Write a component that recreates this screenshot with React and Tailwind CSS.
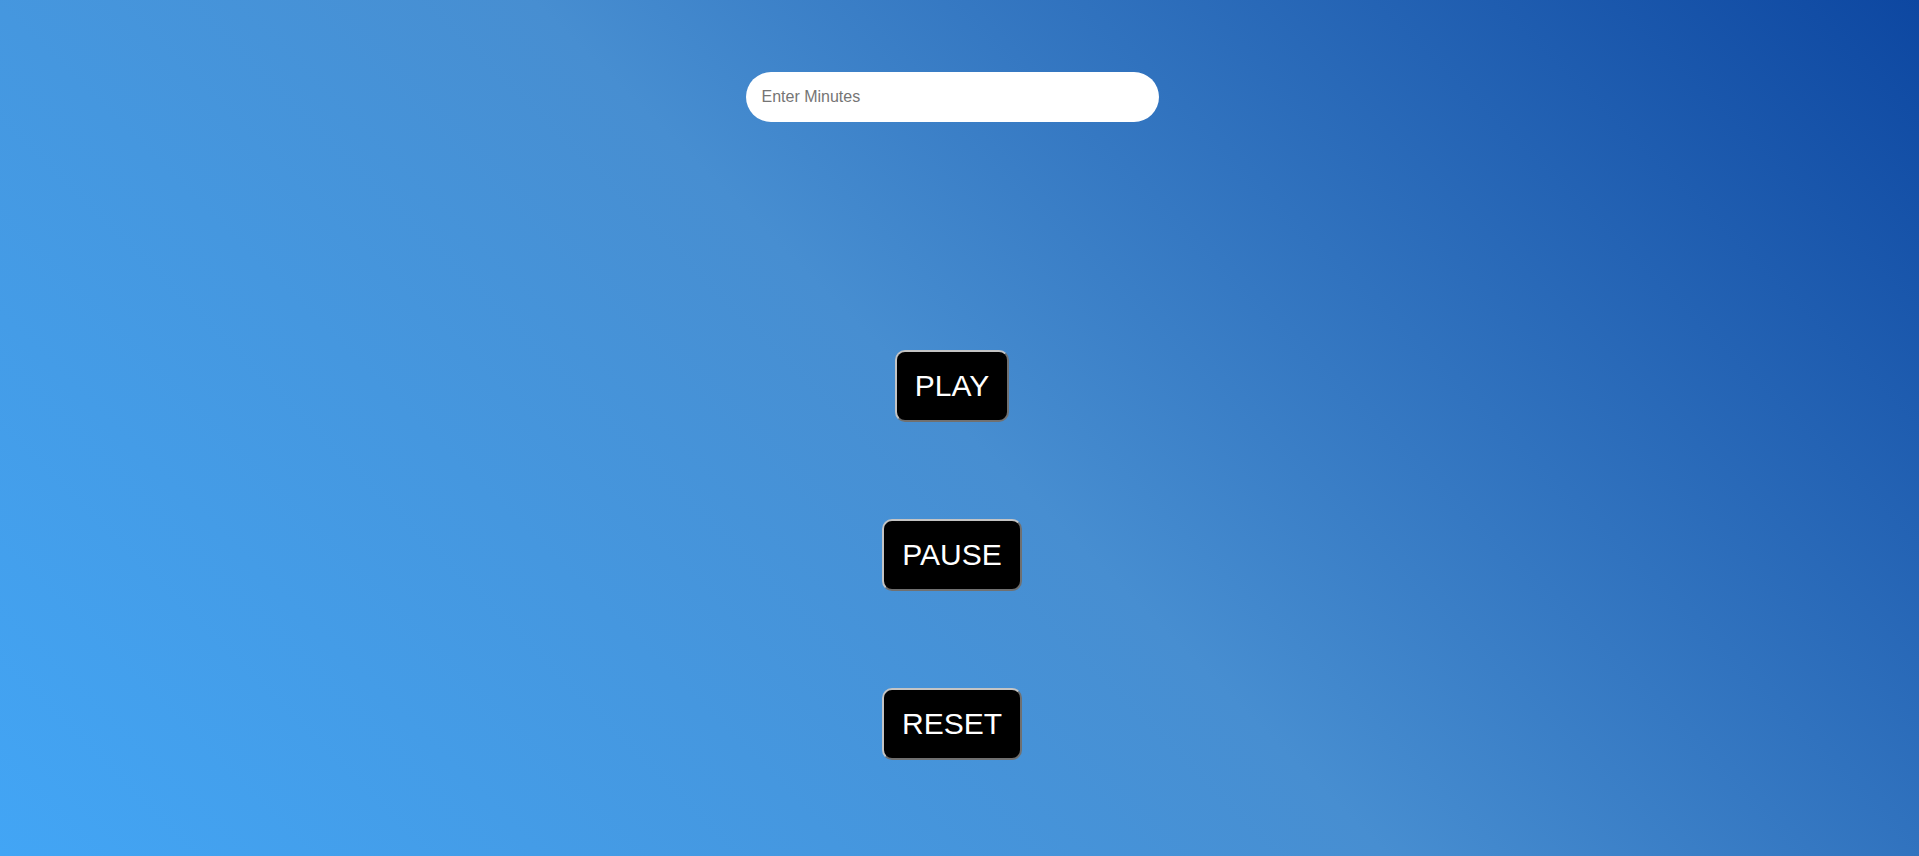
export default function App() {
  const buttons = ["PLAY", "PAUSE", "RESET"];

  return (
    <div className="min-h-[1590px] bg-fixed bg-[linear-gradient(45deg,#42a5f5,#478ed1,#0d47a1)] font-['Liberation_Sans',Arial,sans-serif]">
      <div className="flex flex-col items-center pr-[15px] pt-[72px]">
        <input
          type="text"
          placeholder="Enter Minutes"
          className="h-[50px] w-[413px] rounded-full border-0 bg-white px-4 text-base text-black outline-none placeholder:text-[#757575]"
        />

        <div className="mt-[228px] flex flex-col items-center gap-[97px]">
          {buttons.map((label) => (
            <button
              key={label}
              type="button"
              className="rounded-[10px] border-2 border-[#c4c4c4] bg-black px-[18px] py-[17px] text-[30px] leading-[34px] text-white [border-style:outset]"
            >
              {label}
            </button>
          ))}
        </div>
      </div>
    </div>
  );
}
